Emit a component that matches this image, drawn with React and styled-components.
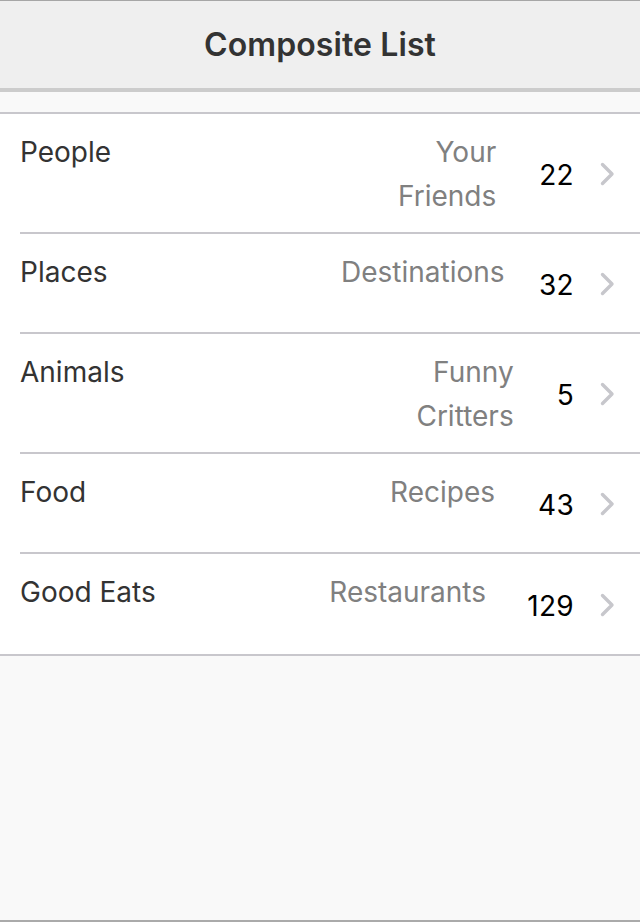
import React from "react";
import styled, { createGlobalStyle } from "styled-components";

const GlobalStyle = createGlobalStyle`
  html, body {
    margin: 0;
    padding: 0;
    background: #f9f9f9;
  }
  body {
    font-family: Inter, "Noto Sans", "Liberation Sans", sans-serif;
    -webkit-font-smoothing: antialiased;
  }
`;

const items = [
  { title: "People", subtitle: "Your\nFriends", count: 22 },
  { title: "Places", subtitle: "Destinations", count: 32 },
  { title: "Animals", subtitle: "Funny\nCritters", count: 5 },
  { title: "Food", subtitle: "Recipes", count: 43 },
  { title: "Good Eats", subtitle: "Restaurants", count: 129 },
];

const Chevron = () => (
  <svg width="15" height="24" viewBox="0 0 15 24">
    <polyline
      points="2.5,2.5 12,12 2.5,21.5"
      fill="none"
      stroke="#c7c7cc"
      strokeWidth="3.4"
      strokeLinecap="round"
      strokeLinejoin="round"
    />
  </svg>
);

const App = () => {
  return (
    <Page>
      <GlobalStyle />
      <Toolbar>
        <h1>Composite List</h1>
      </Toolbar>
      <List>
        {items.map((item, i) => (
          <Row key={item.title}>
            <RowInner last={i === items.length - 1}>
              <Title>{item.title}</Title>
              <Subtitle>{item.subtitle}</Subtitle>
              <Count>{item.count}</Count>
              <Arrow>
                <Chevron />
              </Arrow>
            </RowInner>
          </Row>
        ))}
      </List>
    </Page>
  );
};

const Page = styled.div`
  box-sizing: border-box;
  height: 922px;
  background: #f9f9f9;
  border-top: 1px solid #a6a6a6;
  border-bottom: 2px solid #aaaaaa;
  display: flex;
  flex-direction: column;
`;

const Toolbar = styled.header`
  height: 87px;
  flex-shrink: 0;
  background: #efefef;
  border-bottom: 4px solid #cccccc;
  display: flex;
  align-items: center;
  justify-content: center;

  h1 {
    margin: 0;
    font-size: 32px;
    font-weight: 600;
    color: #333333;
    letter-spacing: 0.1px;
  }
`;

const List = styled.ul`
  list-style: none;
  margin: 20px 0 0;
  padding: 0;
  background: #ffffff;
  border-top: 2px solid #c8c7cc;
  border-bottom: 2px solid #c8c7cc;
`;

const Row = styled.li`
  padding-left: 20px;
`;

const RowInner = styled.div`
  box-sizing: border-box;
  min-height: 100px;
  display: flex;
  align-items: flex-start;
  padding: 16px 25px 14px 0;
  border-bottom: ${(p) => (p.last ? "none" : "2px solid #c8c7cc")};
  font-size: 28px;
  line-height: 44px;
`;

const Title = styled.div`
  flex: 1;
  color: #333333;
  white-space: nowrap;
`;

const Subtitle = styled.div`
  max-width: 155px;
  margin-right: 43px;
  color: #808080;
  text-align: right;
  white-space: pre;
`;

const Count = styled.div`
  align-self: center;
  color: #000000;
  margin-top: 2px;
  letter-spacing: 0.3px;
  margin-right: 1px;
`;

const Arrow = styled.div`
  align-self: center;
  display: flex;
  margin-left: 25px;
`;

export default App;
